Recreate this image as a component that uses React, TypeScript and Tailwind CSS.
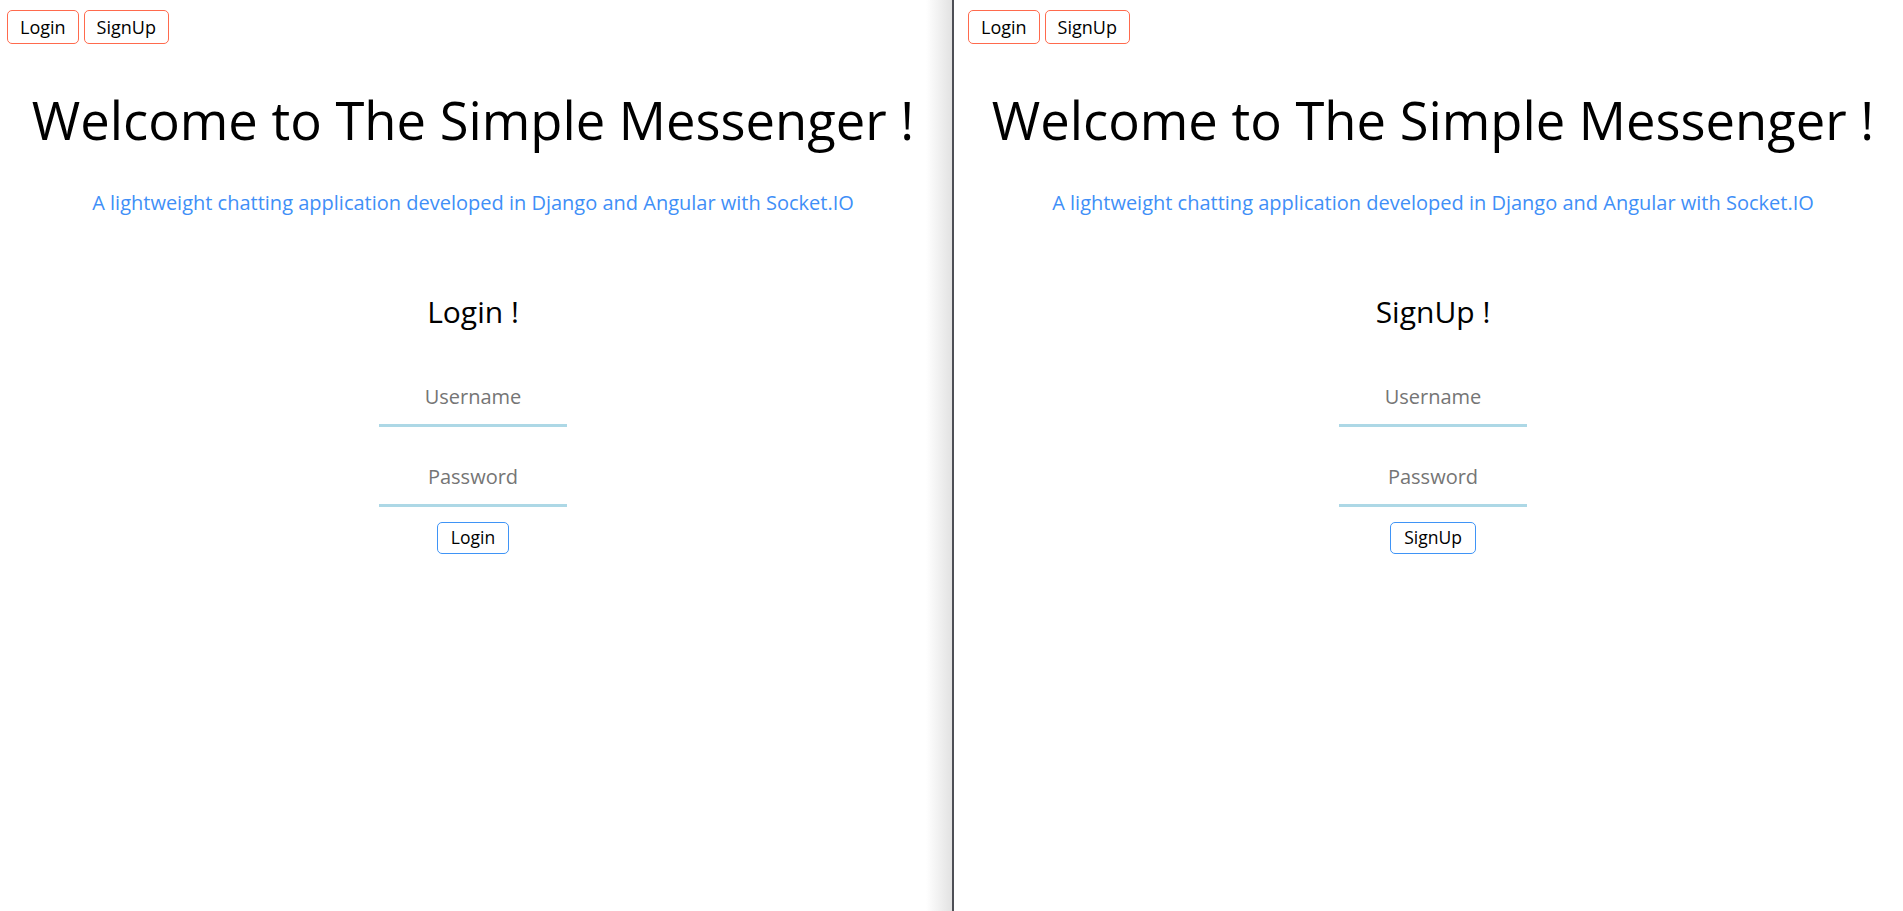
import { useState } from 'react';

type Mode = 'login' | 'signup';

function TopNav({ onPick }: { onPick: (m: Mode) => void }) {
  return (
    <div className="flex gap-[5px] mt-[10px]">
      <button onClick={() => onPick('login')}
        className="h-[34px] px-[12px] border border-[#ff6a4d] rounded-[5px] text-[18px] leading-none text-black bg-white">
        Login
      </button>
      <button onClick={() => onPick('signup')}
        className="h-[34px] px-[12px] border border-[#ff6a4d] rounded-[5px] text-[18px] leading-none text-black bg-white">
        SignUp
      </button>
    </div>
  );
}

function AuthForm({ mode }: { mode: Mode }) {
  const [username, setUsername] = useState('');
  const [password, setPassword] = useState('');
  const label = mode === 'login' ? 'Login' : 'SignUp';

  return (
    <div className="flex flex-col items-center">
      <h2 className="mt-[84px] text-[30px] leading-none text-black">{label} !</h2>
      <input
        type="text" placeholder="Username" value={username}
        onChange={(e) => setUsername(e.target.value)}
        className="mt-[56px] w-[188px] h-[44px] pt-0 pb-[14px] text-[20px] text-center outline-none border-b-[3px] border-[#add8e6] placeholder:text-[#757575]"
      />
      <input
        type="password" placeholder="Password" value={password}
        onChange={(e) => setPassword(e.target.value)}
        className="mt-[36px] w-[188px] h-[44px] pt-0 pb-[14px] text-[20px] text-center outline-none border-b-[3px] border-[#add8e6] placeholder:text-[#757575]"
      />
      <button
        className="mt-[15px] h-[32px] px-[13px] border border-[#3f94f6] rounded-[5px] text-[17.5px] leading-none text-black bg-white">
        {label}
      </button>
    </div>
  );
}

function Messenger({ initial }: { initial: Mode }) {
  const [mode, setMode] = useState<Mode>(initial);
  return (
    <>
      <TopNav onPick={setMode} />
      <div className="flex flex-col items-center">
        <h1 className="mt-[50px] text-[52.5px] leading-none text-black whitespace-nowrap">
          Welcome to The Simple Messenger !
        </h1>
        <p className="mt-[46px] text-[20px] leading-none text-[#3f8ff7] whitespace-nowrap">
          A lightweight chatting application developed in Django and Angular with Socket.IO
        </p>
      </div>
      <AuthForm mode={mode} />
    </>
  );
}

export default function App() {
  return (
    <div className="flex h-[911px] w-full bg-white overflow-hidden" style={{ fontFamily: '"Open Sans", sans-serif' }}>
      <div className="w-[952px] shrink-0 pl-[7px] pr-[13px] bg-[linear-gradient(to_right,#ffffff_926px,#e2e2e2_952px)]">
        <Messenger initial="login" />
      </div>
      <div className="w-[2px] shrink-0 bg-[#4d4f55]" />
      <div className="flex-1 pl-[14px] pr-[5px]">
        <Messenger initial="signup" />
      </div>
    </div>
  );
}
